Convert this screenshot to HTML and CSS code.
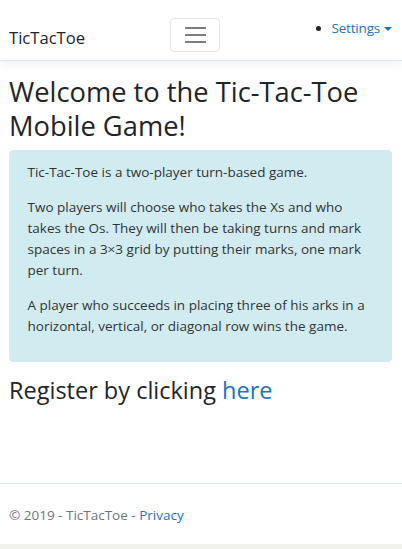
FILE: index.html
```html
<!DOCTYPE html>
<html lang="en">
<head>
<meta charset="utf-8">
<title>TicTacToe</title>
<link rel="stylesheet" href="styles.css">
</head>
<body>
<header class="navbar">
  <a class="brand" href="#">TicTacToe</a>
  <button class="toggler" type="button" aria-label="Toggle navigation">
    <span class="bar"></span><span class="bar"></span><span class="bar"></span>
  </button>
  <ul class="nav">
    <li class="nav-item"><a class="nav-link" href="#">Settings<span class="caret"></span></a></li>
  </ul>
</header>
<main class="content">
  <h1 class="title">Welcome to the Tic-Tac-Toe Mobile Game!</h1>
  <div class="alert">
    <p>Tic-Tac-Toe is a two-player turn-based game.</p>
    <p>Two players will choose who takes the Xs and who takes the Os. They will then be taking turns and mark spaces in a 3×3 grid by putting their marks, one mark per turn.</p>
    <p>A player who succeeds in placing three of his arks in a horizontal, vertical, or diagonal row wins the game.</p>
  </div>
  <h3 class="register">Register by clicking <a href="#">here</a></h3>
</main>
<footer class="footer">© 2019 - TicTacToe - <a href="#">Privacy</a></footer>
<div class="bottom-strip"></div>
</body>
</html>
```
FILE: styles.css
```css
html, body {
  margin: 0;
  padding: 0;
}
body {
  font-family: "Open Sans", "Noto Sans", sans-serif;
  font-size: 13.5px;
  line-height: 21px;
  color: #212529;
  background: #fff;
  min-height: 100vh;
  display: flex;
  flex-direction: column;
}
a {
  color: #1b74c2;
  text-decoration: none;
}
.navbar {
  height: 60px;
  border-bottom: 1px solid #d9e8ec;
  box-shadow: 0 4px 10px rgba(0, 0, 0, 0.05);
  display: grid;
  grid-template-columns: 161px 50px 1fr;
  align-items: start;
  padding: 0 10px 0 9px;
}
.brand {
  color: #212529;
  font-size: 16.6px;
  line-height: 22px;
  margin-top: 27px;
}
.toggler {
  margin-top: 18px;
  width: 50px;
  height: 34px;
  border: 1px solid rgba(0, 0, 0, 0.1);
  border-radius: 4px;
  background: transparent;
  padding: 0;
  display: flex;
  flex-direction: column;
  align-items: center;
  justify-content: center;
  gap: 5px;
}
.bar {
  display: block;
  width: 21px;
  height: 2px;
  background: #7d7d7d;
}
.nav {
  list-style: disc;
  margin: 0;
  padding: 0;
  justify-self: end;
  margin-top: 18px;
}
.nav-link {
  display: inline-flex;
  align-items: center;
  gap: 4px;
  letter-spacing: -0.2px;
}
.caret {
  display: inline-block;
  width: 0;
  height: 0;
  border-left: 4px solid transparent;
  border-right: 4px solid transparent;
  border-top: 4px solid #1b74c2;
}
.content {
  flex: 1;
  padding: 14px 10px 0 9px;
}
.title {
  font-size: 27.3px;
  font-weight: 400;
  line-height: 34px;
  margin: 0 0 7px 0;
}
.alert {
  background: #d1ecf1;
  border: 1px solid #d1ecf1;
  border-radius: 4px;
  padding: 10.5px 17.5px;
  color: #333;
  margin-bottom: 14px;
}
.alert p {
  margin: 0 0 14px 0;
}
.register {
  font-size: 23.5px;
  font-weight: 400;
  line-height: 29px;
  margin: 0;
}
.footer {
  border-top: 1px solid #d9e8ec;
  height: 60px;
  line-height: 62px;
  padding: 0 9px;
  color: #6c757d;
}
.bottom-strip {
  height: 5px;
  background: #f1f1ec;
}
```
